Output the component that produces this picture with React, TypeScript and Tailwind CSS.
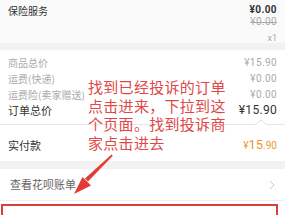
import React from "react";

const cjk = { fontFamily: '"Noto Sans CJK SC", "Noto Sans", sans-serif' };
const num = { fontFamily: 'Roboto, "Liberation Sans", sans-serif' };

export default function App() {
  return (
    <div className="relative w-[285px] h-[215px] overflow-hidden bg-white" style={cjk}>
      {/* insurance section */}
      <div className="h-[43px] bg-[#fafafa] px-[8px] flex justify-between">
        <div className="pt-[4px] text-[10px] leading-[14px] text-[#333]">保险服务</div>
        <div className="flex flex-col items-end pt-[4px]" style={num}>
          <div className="text-[10px] leading-[12px] font-bold text-[#333] tracking-[0.4px]">¥0.00</div>
          <div className="text-[10px] leading-[12px] text-[#aaa] line-through tracking-[0.4px]">¥0.00</div>
          <div className="mt-[4px] text-[9px] leading-[12px] text-[#aaa]">x1</div>
        </div>
      </div>
      <div className="h-[7px] bg-[#f2f2f2]" />

      {/* price details */}
      <div className="px-[8px] pt-[4px] pb-[6px]">
        <div className="flex justify-between items-center h-[16px]">
          <span className="text-[10px] text-[#aaa]">商品总价</span>
          <span className="text-[10px] text-[#aaa] tracking-[0.4px]" style={num}>¥15.90</span>
        </div>
        <div className="flex justify-between items-center h-[16px]">
          <span className="text-[10px] text-[#aaa]">运费(快递)</span>
          <span className="text-[10px] text-[#aaa] tracking-[0.4px]" style={num}>¥0.00</span>
        </div>
        <div className="flex justify-between items-center h-[16px]">
          <span className="text-[10px] text-[#aaa]">运费险(卖家赠送)</span>
          <span className="text-[10px] text-[#aaa] tracking-[0.4px]" style={num}>¥0.00</span>
        </div>
        <div className="flex justify-between items-center h-[16px]">
          <span className="text-[11px] text-[#333]">订单总价</span>
          <span className="text-[12px] text-[#333] tracking-[0.3px]" style={num}>¥15.90</span>
        </div>
      </div>

      {/* divider with notch */}
      <div className="relative mx-[0px] h-[1px] bg-[#e6e6e6]">
        <svg className="absolute left-[255px] top-[-4px]" width="12" height="6" viewBox="0 0 12 6">
          <path d="M0 5 L6 0 L12 5" fill="#fff" stroke="#e0e0e0" strokeWidth="1" />
        </svg>
      </div>

      {/* paid */}
      <div className="h-[36px] px-[8px] flex justify-between items-center pt-[4px]">
        <span className="text-[11px] text-[#333]">实付款</span>
        <span className="text-[#f0962e] flex items-baseline" style={num}>
          <span className="text-[10px]">¥</span>
          <span className="text-[13px]">15</span>
          <span className="text-[10px]">.90</span>
        </span>
      </div>
      <div className="h-[8px] bg-[#f2f2f2]" />

      {/* huabei */}
      <div className="h-[32px] pl-[10px] pr-[10px] flex justify-between items-center border-b border-[#eeeeee]">
        <span className="text-[11px] text-[#666]">查看花呗账单</span>
        <svg width="6" height="10" viewBox="0 0 6 10">
          <path d="M1 1 L5 5 L1 9" fill="none" stroke="#c8c8c8" strokeWidth="1" />
        </svg>
      </div>

      {/* red box */}
      <div className="mt-[3px] ml-[1px] w-[277px] h-[40px] border-2 border-[#d9403c]" />

      {/* annotation text */}
      <div className="absolute left-[88px] top-[78px] text-[15px] leading-[18.7px] text-[#e04848] tracking-[0.3px]">
        <div>找到已经投诉的订单</div>
        <div>点击进来，下拉到这</div>
        <div>个页面。找到投诉商</div>
        <div>家点击进去</div>
      </div>

      {/* arrow */}
      <svg className="absolute left-0 top-0" width="285" height="215" viewBox="0 0 285 215">
        <polygon points="111.5,154.5 112.8,155.8 88,181.5 85,178.5" fill="#e23b36" />
        <polygon points="74,194 91,185.5 82.5,177" fill="#e23b36" />
      </svg>
    </div>
  );
}
